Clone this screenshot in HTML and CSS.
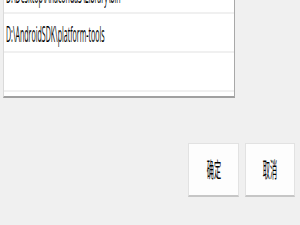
FILE: index.html
```html
<!DOCTYPE html>
<html>
<head>
<meta charset="utf-8">
<link rel="stylesheet" href="styles.css">
</head>
<body>
<div class="page">
  <div class="listbox">
    <div class="row"><span class="txt">D:\Desktop\Anaconda3\Library\bin</span></div>
    <div class="row"><span class="txt">D:\AndroidSDK\platform-tools</span></div>
    <div class="row"></div>
  </div>
  <div class="buttons">
    <div class="btn btn-ok"><span class="txt">确定</span></div>
    <div class="btn btn-cancel"><span class="txt">取消</span></div>
  </div>
</div>
</body>
</html>
```
FILE: styles.css
```css
html, body {
  margin: 0;
  padding: 0;
  background: #f0f0f0;
  width: 300px;
  height: 225px;
  overflow: hidden;
  font-family: "Open Sans", "Noto Sans", "Noto Sans CJK SC", sans-serif;
  color: #000;
}
.page {
  display: flex;
  flex-direction: column;
}
.listbox {
  margin: -25px 0 0 3px;
  width: 232px;
  height: 123px;
  box-sizing: border-box;
  background: #fff;
  border-left: 1px solid #dadada;
  border-right: 1px solid #a8a8a8;
  border-bottom: 2px solid #a0a0a0;
  overflow: hidden;
}
.row {
  height: 37px;
  border-bottom: 2px solid #f0f0f0;
  display: flex;
  align-items: center;
  padding-left: 2px;
}
.txt {
  display: inline-block;
  font-size: 22px;
  transform: scaleX(0.32);
  transform-origin: left center;
  white-space: nowrap;
  line-height: 1;
}
.buttons {
  display: flex;
  justify-content: flex-end;
  gap: 6px;
  margin-top: 45px;
  padding-right: 5px;
}
.btn {
  box-sizing: border-box;
  height: 54px;
  background: #fdfdfd;
  border: 1px solid #e2e2e2;
  border-bottom: 2px solid #c6c6c6;
  display: flex;
  align-items: center;
  justify-content: center;
}
.btn-ok { width: 51px; }
.btn-cancel { width: 50px; }
.btn .txt {
  transform-origin: center center;
  font-size: 21px;
  transform: scaleX(0.34);
}
```
